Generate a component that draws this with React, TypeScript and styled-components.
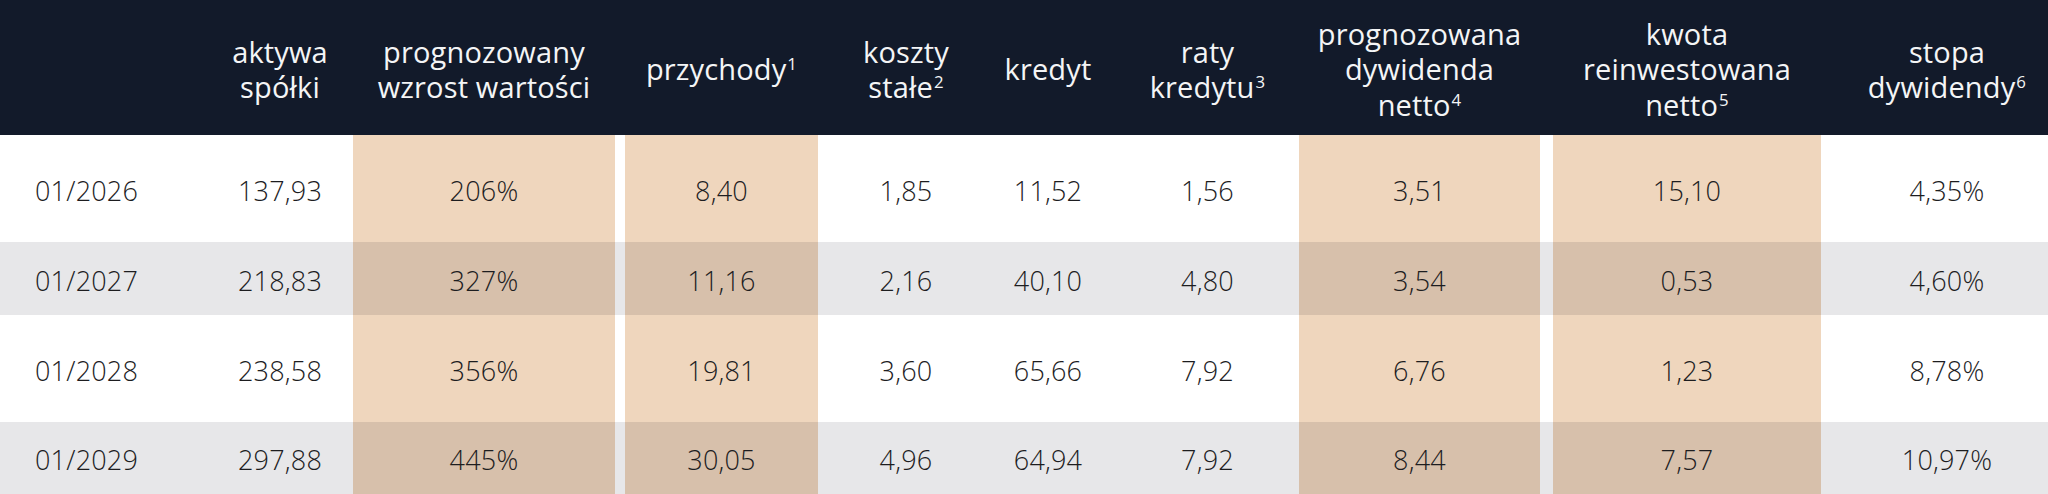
import React from 'react';
import styled, { createGlobalStyle } from 'styled-components';

const GlobalStyle = createGlobalStyle`
  html, body {
    margin: 0;
    padding: 0;
    background: #ffffff;
  }
  body {
    font-family: "Open Sans", "Liberation Sans", sans-serif;
    -webkit-font-smoothing: antialiased;
  }
`;

const COLUMNS = '207px 146px 262px 203px 176px 108px 197px 241px 281px 1fr';

type ColDef = {
  align: 'left' | 'center';
  pl?: number;
  gap?: number;
  hl?: boolean;
};

const cols: ColDef[] = [
  { align: 'left', pl: 35 },
  { align: 'center' },
  { align: 'center', hl: true },
  { align: 'center', hl: true, gap: 10 },
  { align: 'center' },
  { align: 'center' },
  { align: 'center', pl: 14 },
  { align: 'center', hl: true },
  { align: 'center', hl: true, gap: 13 },
  { align: 'center', pl: 25 },
];

const SupText = styled.span`
  font-size: 0.58em;
  line-height: 0;
  position: relative;
  top: -0.6em;
  margin-left: 1px;
`;

const headers: React.ReactNode[] = [
  '',
  <>aktywa<br />spółki</>,
  <>prognozowany<br />wzrost wartości</>,
  <>przychody<SupText>1</SupText></>,
  <>koszty<br />stałe<SupText>2</SupText></>,
  <>kredyt</>,
  <>raty<br />kredytu<SupText>3</SupText></>,
  <>prognozowana<br />dywidenda<br />netto<SupText>4</SupText></>,
  <>kwota<br />reinwestowana<br />netto<SupText>5</SupText></>,
  <>stopa<br />dywidendy<SupText>6</SupText></>,
];

const rows: { values: string[]; shaded: boolean; height: number }[] = [
  { values: ['01/2026', '137,93', '206%', '8,40', '1,85', '11,52', '1,56', '3,51', '15,10', '4,35%'], shaded: false, height: 107 },
  { values: ['01/2027', '218,83', '327%', '11,16', '2,16', '40,10', '4,80', '3,54', '0,53', '4,60%'], shaded: true, height: 73 },
  { values: ['01/2028', '238,58', '356%', '19,81', '3,60', '65,66', '7,92', '6,76', '1,23', '8,78%'], shaded: false, height: 107 },
  { values: ['01/2029', '297,88', '445%', '30,05', '4,96', '64,94', '7,92', '8,44', '7,57', '10,97%'], shaded: true, height: 72 },
];

const Table = styled.div`
  width: 2048px;
  display: flex;
  flex-direction: column;
`;

const HeaderRow = styled.div`
  display: grid;
  grid-template-columns: ${COLUMNS};
  height: 135px;
  background: #121a2a;
  color: #f4f5f6;
`;

const HeadCell = styled.div<{ $align: 'left' | 'center'; $pl: number; $gap: number }>`
  display: flex;
  align-items: center;
  justify-content: ${(p) => (p.$align === 'left' ? 'flex-start' : 'center')};
  text-align: ${(p) => p.$align};
  padding-left: ${(p) => p.$pl}px;
  margin-left: ${(p) => p.$gap}px;
  padding-top: 3px;
  font-family: "Open Sans", "Liberation Sans", sans-serif;
  font-size: 29px;
  line-height: 35.5px;
  font-weight: 400;
  letter-spacing: 0.15px;
`;

const BodyRow = styled.div<{ $shaded: boolean; $h: number }>`
  display: grid;
  grid-template-columns: ${COLUMNS};
  height: ${(p) => p.$h}px;
  background: ${(p) => (p.$shaded ? '#e7e7e9' : '#ffffff')};
`;

const Cell = styled.div<{
  $align: 'left' | 'center';
  $pl: number;
  $gap: number;
  $hl: boolean;
  $shaded: boolean;
}>`
  display: flex;
  align-items: center;
  justify-content: ${(p) => (p.$align === 'left' ? 'flex-start' : 'center')};
  padding-left: ${(p) => p.$pl}px;
  margin-left: ${(p) => p.$gap}px;
  padding-top: 3px;
  background: ${(p) =>
    p.$hl ? (p.$shaded ? '#d7c0ab' : '#efd6bd') : 'transparent'};
  font-family: "Open Sans", "Liberation Sans", sans-serif;
  font-size: 27px;
  font-weight: 300;
  color: #1d1d1f;
  letter-spacing: 0.2px;
`;

export default function App() {
  return (
    <>
      <GlobalStyle />
      <Table>
        <HeaderRow>
          {headers.map((h, i) => (
            <HeadCell key={i} $align={cols[i].align} $pl={cols[i].pl ?? 0} $gap={cols[i].gap ?? 0}>
              <span>{h}</span>
            </HeadCell>
          ))}
        </HeaderRow>
        {rows.map((r, ri) => (
          <BodyRow key={ri} $shaded={r.shaded} $h={r.height}>
            {r.values.map((v, i) => (
              <Cell
                key={i}
                $align={cols[i].align}
                $pl={cols[i].pl ?? 0}
                $gap={cols[i].gap ?? 0}
                $hl={!!cols[i].hl}
                $shaded={r.shaded}
              >
                {v}
              </Cell>
            ))}
          </BodyRow>
        ))}
      </Table>
    </>
  );
}
